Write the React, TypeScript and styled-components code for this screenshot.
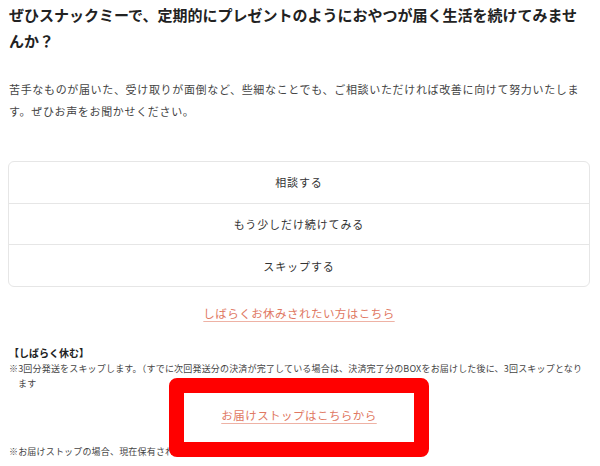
import styled, { createGlobalStyle } from "styled-components";

const GlobalStyle = createGlobalStyle`
  html, body {
    margin: 0;
    padding: 0;
    overflow: hidden;
    background: #fff;
  }
  body {
    font-family: "Noto Sans CJK JP", "Noto Sans", sans-serif;
    color: #333;
  }
`;

const Page = styled.main`
  padding: 0 10px 0 8px;
  display: flex;
  flex-direction: column;
`;

const Title = styled.h1`
  margin: 2px 0 0 1px;
  font-size: 15px;
  line-height: 26px;
  font-weight: 700;
  color: #222;
`;

const Lead = styled.p`
  margin: 24px 0 0 1px;
  font-size: 11px;
  line-height: 22px;
  letter-spacing: 0.06em;
  color: #444;
`;

const ChoiceList = styled.ul`
  list-style: none;
  margin: 39px 0 0;
  padding: 0;
  border: 1px solid #e6e6e6;
  border-radius: 6px;
  overflow: hidden;
`;

const Choice = styled.li`
  height: 40.7px;
  display: flex;
  align-items: center;
  justify-content: center;
  font-size: 11px;
  letter-spacing: 0.08em;
  color: #333;
  & + & {
    border-top: 1px solid #e6e6e6;
  }
`;

const TextLink = styled.a<{ $top: number }>`
  align-self: center;
  margin-top: ${(p) => p.$top}px;
  font-size: 11.5px;
  line-height: 20px;
  letter-spacing: 0.04em;
  color: #e07862;
  text-decoration: underline;
  text-decoration-color: #eeb2a5;
  text-underline-offset: 3px;
`;

const NoteHeading = styled.h2`
  margin: 22px 0 0 1px;
  font-size: 10px;
  line-height: 16px;
  font-weight: 700;
  color: #222;
`;

const Note = styled.p<{ $top: number }>`
  margin: ${(p) => p.$top}px 0 0 1px;
  padding-left: 1em;
  text-indent: -1em;
  font-size: 9px;
  line-height: 15px;
  letter-spacing: 0.02em;
  color: #444;
`;

const StopRow = styled.div`
  position: relative;
  display: flex;
  justify-content: center;
  margin-top: 14px;
`;

const Highlight = styled.span`
  position: absolute;
  z-index: 2;
  top: -27px;
  left: 50%;
  width: 260px;
  height: 79px;
  box-sizing: border-box;
  transform: translateX(-50%);
  border: 15px solid #ff0000;
  border-radius: 8px;
  pointer-events: none;
`;

export default function App() {
  return (
    <>
      <GlobalStyle />
      <Page>
        <Title>
          ぜひスナックミーで、定期的にプレゼントのようにおやつが届く生活を続けてみませんか？
        </Title>
        <Lead>
          苦手なものが届いた、受け取りが面倒など、些細なことでも、ご相談いただければ改善に向けて努力いたします。ぜひお声をお聞かせください。
        </Lead>
        <ChoiceList>
          <Choice>相談する</Choice>
          <Choice>もう少しだけ続けてみる</Choice>
          <Choice>スキップする</Choice>
        </ChoiceList>
        <TextLink $top={16} href="#">
          しばらくお休みされたい方はこちら
        </TextLink>
        <NoteHeading>【しばらく休む】</NoteHeading>
        <Note $top={0}>
          ※3回分発送をスキップします。（すでに次回発送分の決済が完了している場合は、決済完了分のBOXをお届けした後に、3回スキップとなります
        </Note>
        <StopRow>
          <TextLink $top={0} href="#">
            お届けストップはこちらから
          </TextLink>
          <Highlight />
        </StopRow>
        <Note $top={19}>
          ※お届けストップの場合、現在保有されているポイントは全て失効となります。
        </Note>
      </Page>
    </>
  );
}
